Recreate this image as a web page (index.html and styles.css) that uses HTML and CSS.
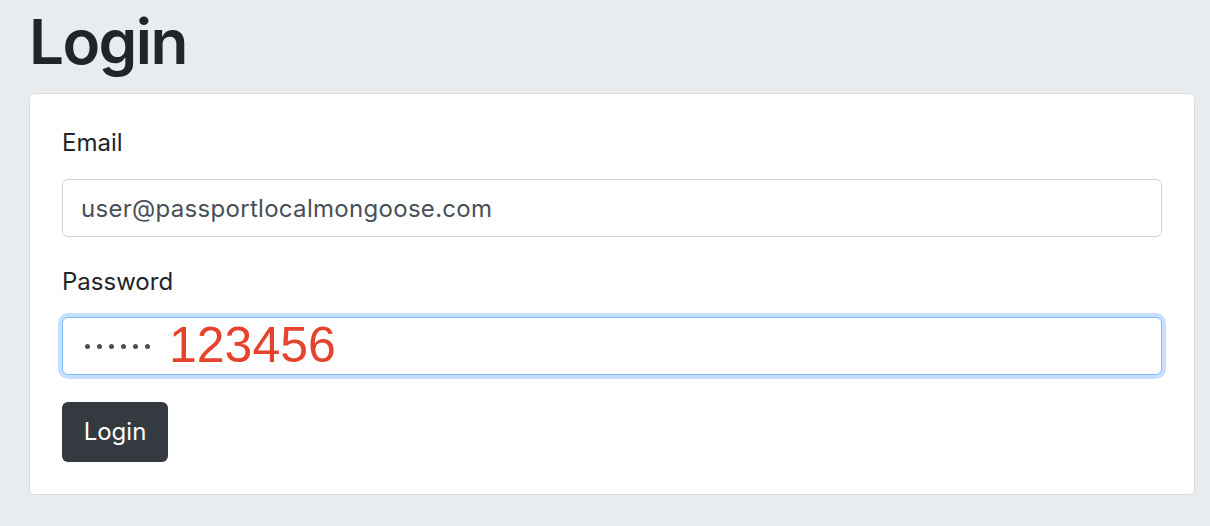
FILE: index.html
```html
<!DOCTYPE html>
<html lang="en">
<head>
<meta charset="utf-8">
<title>Login</title>
<link rel="stylesheet" href="styles.css">
</head>
<body>
<main class="page">
  <h1 class="title">Login</h1>
  <form class="card">
    <div class="group">
      <label class="label" for="email">Email</label>
      <div class="field" id="email">user@passportlocalmongoose.com</div>
    </div>
    <div class="group group-last">
      <label class="label" for="password">Password</label>
      <div class="field field-focus" id="password">
        <span class="dots"><i></i><i></i><i></i><i></i><i></i><i></i></span>
        <span class="note">123456</span>
      </div>
    </div>
    <button class="btn" type="button">Login</button>
  </form>
</main>
</body>
</html>
```

FILE: styles.css
```css
* { box-sizing: border-box; }
html, body {
  margin: 0;
  padding: 0;
  background: #e9ecef;
  font-family: Inter, "Noto Sans", "Liberation Sans", sans-serif;
  color: #212529;
}
.page {
  padding: 0 15px 0 29px;
}
.title {
  margin: 0;
  padding-top: 3px;
  font-size: 62px;
  font-weight: 600;
  line-height: 77px;
  letter-spacing: -1.6px;
  color: #212529;
  height: 93px;
}
.card {
  display: flex;
  flex-direction: column;
  align-items: flex-start;
  background: #fff;
  border: 1px solid #dcdcdc;
  border-radius: 5px;
  padding: 31px 32px 31px 32px;
  height: 402px;
}
.group {
  display: flex;
  flex-direction: column;
  width: 100%;
  margin-bottom: 27px;
}
.group-last { margin-bottom: 27px; }
.label {
  font-size: 24px;
  line-height: 36px;
  margin-bottom: 18px;
  color: #212529;
}
.group-last .label { margin-bottom: 17px; }
.field {
  display: flex;
  align-items: center;
  height: 58px;
  width: 100%;
  border: 1.5px solid #ced4da;
  border-radius: 6px;
  padding: 0 18px;
  font-size: 24px;
  letter-spacing: 0.3px;
  color: #495057;
  background: #fff;
}
.field-focus {
  border-color: #80bdff;
  box-shadow: 0 0 0 4px #c6dffd;
  padding-left: 22px;
}
.dots {
  display: flex;
  gap: 7px;
  margin-right: 19px;
}
.dots i {
  display: block;
  width: 5px;
  height: 5px;
  border-radius: 50%;
  background: #4a4f55;
}
.note {
  color: #e5432d;
  font-family: "Liberation Sans", Arial, sans-serif;
  font-size: 50px;
  letter-spacing: 0;
  line-height: 1;
  margin-top: -2px;
}
.btn {
  font-family: inherit;
  font-size: 24px;
  line-height: 36px;
  background: #343a40;
  color: #fff;
  border: 0;
  border-radius: 6px;
  height: 60px;
  width: 106px;
  padding: 0;
}
```
